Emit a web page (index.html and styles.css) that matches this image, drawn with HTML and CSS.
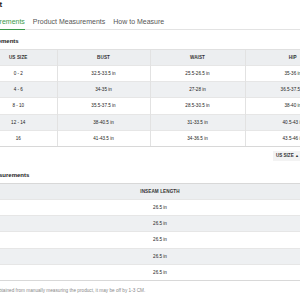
FILE: index.html
```html
<!DOCTYPE html>
<html>
<head>
<meta charset="utf-8">
<link rel="stylesheet" href="styles.css">
</head>
<body>
<div class="page">
  <div class="title">Size Chart</div>
  <div class="tabs">
    <div class="tab active">Size Measurements</div>
    <div class="tab">Product Measurements</div>
    <div class="tab">How to Measure</div>
  </div>
  <div class="heading">Size Measurements</div>
  <table class="chart sizes">
    <colgroup><col class="c1"><col class="c2"><col class="c3"><col class="c4"></colgroup>
    <thead><tr><th>US SIZE</th><th>BUST</th><th>WAIST</th><th>HIP</th></tr></thead>
    <tbody>
      <tr><td>0 - 2</td><td>32.5-33.5 in</td><td>25.5-26.5 in</td><td>35-36 in</td></tr>
      <tr><td>4 - 6</td><td>34-35 in</td><td>27-28 in</td><td>36.5-37.5 in</td></tr>
      <tr><td>8 - 10</td><td>35.5-37.5 in</td><td>28.5-30.5 in</td><td>38-40 in</td></tr>
      <tr><td>12 - 14</td><td>38-40.5 in</td><td>31-33.5 in</td><td>40.5-43 in</td></tr>
      <tr><td>16</td><td>41-43.5 in</td><td>34-36.5 in</td><td>43.5-46 in</td></tr>
    </tbody>
  </table>
  <div class="unit-row"><span class="unit">US SIZE <span class="arrow">▲</span></span></div>
  <div class="heading second">Product Measurements</div>
  <table class="chart product">
    <thead><tr><th>INSEAM LENGTH</th></tr></thead>
    <tbody>
      <tr><td>26.5 in</td></tr>
      <tr><td>26.5 in</td></tr>
      <tr><td>26.5 in</td></tr>
      <tr><td>26.5 in</td></tr>
      <tr><td>26.5 in</td></tr>
    </tbody>
  </table>
  <div class="note">*The data is obtained from manually measuring the product, it may be off by 1-3 CM.</div>
</div>
</body>
</html>
```
FILE: styles.css
```css
html, body {
  margin: 0;
  padding: 0;
  background: #fff;
  overflow: hidden;
}
body {
  width: 300px;
  height: 300px;
  font-family: "Liberation Sans", Arial, sans-serif;
  color: #222;
}
.page {
  margin-left: -40px;
  width: 380px;
  padding-left: 3px;
  box-sizing: border-box;
}
.title {
  font-size: 8px;
  font-weight: bold;
  line-height: 10px;
  height: 11px;
}
.tabs {
  display: flex;
  gap: 8px;
  margin-top: 6px;
  border-bottom: 1px solid #e3e3e3;
  margin-right: -40px;
}
.tab {
  font-size: 7px;
  line-height: 9px;
  padding-bottom: 3px;
  color: #555;
  border-bottom: 1px solid transparent;
  margin-bottom: -1px;
}
.tab.active {
  color: #3c9a4c;
  border-bottom-color: #3c9a4c;
}
.heading {
  font-size: 6px;
  font-weight: bold;
  line-height: 8px;
  margin-top: 7px;
  color: #222;
}
.heading.second { margin-top: 10px; }
.chart {
  border-collapse: collapse;
  margin-left: 17px;
  width: 360px;
  table-layout: fixed;
  font-size: 4.6px;
  color: #222;
}
.sizes { margin-top: 4px; }
.chart th, .chart td {
  text-align: center;
  padding: 0;
}
.chart th {
  background: #eceef0;
  font-weight: 600;
  height: 15px;
  color: #333;
  letter-spacing: 0.1px;
}
.chart td {
  height: 15.2px;
  border-top: 1px solid #e6e6e6;
}
.chart tbody tr:nth-child(even) td { background: #eef0f2; }
.chart tbody tr:last-child td { border-bottom: 1px solid #d8d8d8; }
.sizes th + th, .sizes td + td { border-left: 1px solid #e2e2e2; }
.sizes thead th { border-top: 1px solid #e0e0e0; }
.c1 { width: 77px; }
.c2 { width: 93px; }
.c3 { width: 95px; }
.c4 { width: 95px; }
.unit-row {
  display: flex;
  justify-content: flex-end;
  width: 337px;
  margin-top: 4px;
}
.unit {
  background: #f3f3f3;
  font-size: 4.6px;
  font-weight: 600;
  line-height: 10px;
  padding: 0 1px 0 3px;
  color: #333;
}
.arrow { font-size: 4px; }
.product { margin-top: 4px; }
.product thead th { border-top: 1px solid #d8d8d8; }
.note {
  font-size: 4.7px;
  color: #888;
  margin-top: 7px;
  margin-left: 7px;
}
```
